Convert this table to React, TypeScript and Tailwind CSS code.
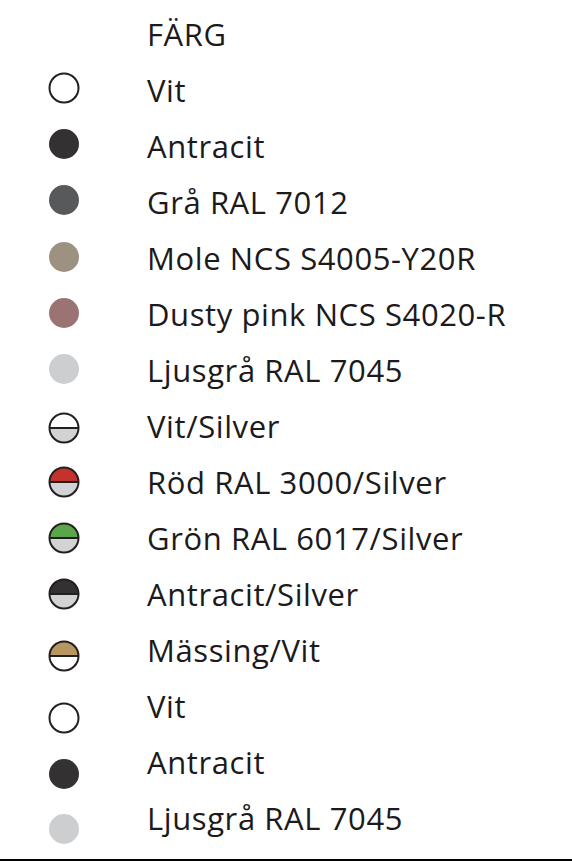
type Swatch =
  | { kind: 'ring' }
  | { kind: 'dot'; color: string }
  | { kind: 'half'; top: string; bottom: string }

type Row = { label: string; swatch: Swatch; nudge: string }

const rows: Row[] = [
  { label: 'Vit', swatch: { kind: 'ring' }, nudge: 'mt-[-4px]' },
  { label: 'Antracit', swatch: { kind: 'dot', color: '#333132' }, nudge: 'mt-[-4px]' },
  { label: 'Grå RAL 7012', swatch: { kind: 'dot', color: '#58595b' }, nudge: 'mt-[-4px]' },
  { label: 'Mole NCS S4005-Y20R', swatch: { kind: 'dot', color: '#9d9282' }, nudge: 'mt-[-2px]' },
  { label: 'Dusty pink NCS S4020-R', swatch: { kind: 'dot', color: '#9b7374' }, nudge: 'mt-[-2px]' },
  { label: 'Ljusgrå RAL 7045', swatch: { kind: 'dot', color: '#cdced0' }, nudge: 'mt-[-2px]' },
  { label: 'Vit/Silver', swatch: { kind: 'half', top: '#ffffff', bottom: '#d1d3d4' }, nudge: 'mt-[4px]' },
  { label: 'Röd RAL 3000/Silver', swatch: { kind: 'half', top: '#c5312b', bottom: '#d1d3d4' }, nudge: 'mt-[0px]' },
  { label: 'Grön RAL 6017/Silver', swatch: { kind: 'half', top: '#5ba64a', bottom: '#d1d3d4' }, nudge: 'mt-[0px]' },
  { label: 'Antracit/Silver', swatch: { kind: 'half', top: '#333132', bottom: '#d1d3d4' }, nudge: 'mt-[0px]' },
  { label: 'Mässing/Vit', swatch: { kind: 'half', top: '#b8965f', bottom: '#ffffff' }, nudge: 'mt-[12px]' },
  { label: 'Vit', swatch: { kind: 'ring' }, nudge: 'mt-[24px]' },
  { label: 'Antracit', swatch: { kind: 'dot', color: '#333132' }, nudge: 'mt-[24px]' },
  { label: 'Ljusgrå RAL 7045', swatch: { kind: 'dot', color: '#cdced0' }, nudge: 'mt-[22px]' },
]

function SwatchIcon({ swatch }: { swatch: Swatch }) {
  if (swatch.kind === 'ring') {
    return (
      <svg width="32" height="32" viewBox="0 0 32 32">
        <circle cx="16" cy="16" r="14.5" fill="#fff" stroke="#231f20" strokeWidth="2" />
      </svg>
    )
  }
  if (swatch.kind === 'dot') {
    return (
      <svg width="32" height="32" viewBox="0 0 32 32">
        <circle cx="16" cy="16" r="15" fill={swatch.color} />
      </svg>
    )
  }
  return (
    <svg width="32" height="32" viewBox="0 0 32 32">
      <path d="M1.5 16 A14.5 14.5 0 0 1 30.5 16 Z" fill={swatch.top} />
      <path d="M1.5 16 A14.5 14.5 0 0 0 30.5 16 Z" fill={swatch.bottom} />
      <line x1="1.5" y1="16" x2="30.5" y2="16" stroke="#231f20" strokeWidth="2" />
      <circle cx="16" cy="16" r="14.5" fill="none" stroke="#231f20" strokeWidth="2" />
    </svg>
  )
}

export default function App() {
  return (
    <div className="flex h-[861px] w-[572px] flex-col bg-white font-['Open_Sans',sans-serif] text-[31px] tracking-[0.6px] text-[#1c1a1b]">
      <div className="flex flex-1 flex-col pt-[6px]">
        <div className="flex h-[56px] items-center pl-[147px]">FÄRG</div>
        {rows.map((row, i) => (
          <div key={i} className="flex h-[56px] items-center">
            <div className={`flex w-[147px] justify-start pl-[48px] ${row.nudge}`}>
              <SwatchIcon swatch={row.swatch} />
            </div>
            <span>{row.label}</span>
          </div>
        ))}
      </div>
      <div className="h-[2px] bg-black" />
    </div>
  )
}
